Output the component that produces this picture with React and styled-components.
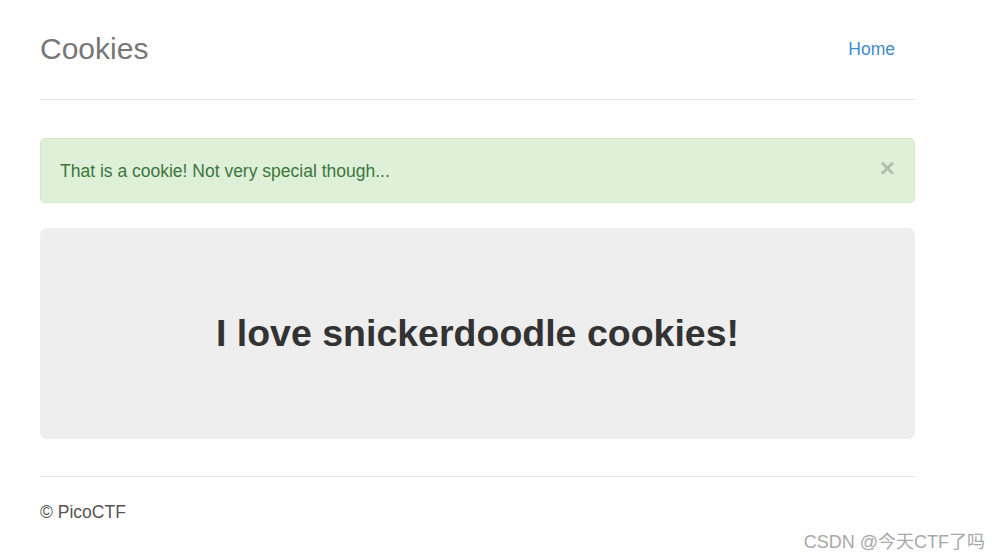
import React from "react";
import styled, { createGlobalStyle } from "styled-components";

const Global = createGlobalStyle`
  html, body { margin: 0; padding: 0; background: #fff; }
  body {
    font-family: "Liberation Sans", Arial, Helvetica, sans-serif;
    font-size: 17.5px;
    line-height: 1.42857;
    color: #333;
  }
  * { box-sizing: border-box; }
`;

const Page = styled.div`
  position: relative;
  width: 1001px;
  height: 560px;
  overflow: hidden;
`;

const Container = styled.div`
  width: 875px;
  margin-left: 40px;
`;

const Header = styled.header`
  display: flex;
  align-items: center;
  justify-content: space-between;
  padding-top: 24px;
  padding-bottom: 25px;
  border-bottom: 1px solid #e5e5e5;
  margin-bottom: 38px;
`;

const Brand = styled.h3`
  margin: 0;
  font-size: 30px;
  font-weight: 500;
  line-height: 50px;
  color: #777;
`;

const NavLink = styled.a`
  display: block;
  padding: 12px 20px 12px 19px;
  color: #428bca;
  text-decoration: none;
  font-size: 17.5px;
  line-height: 26px;
`;

const Alert = styled.div`
  display: flex;
  align-items: center;
  justify-content: space-between;
  height: 65px;
  padding: 0 19px;
  border: 1px solid #d6e9c6;
  border-radius: 5px;
  background: #dff0d8;
  color: #3c763d;
  margin-bottom: 25px;
  line-height: 24px;
`;

const Close = styled.button`
  border: 0;
  background: transparent;
  padding: 0;
  margin: -5px 0 0 0;
  font-family: "Liberation Sans", Arial, sans-serif;
  font-size: 26px;
  font-weight: bold;
  line-height: 1;
  color: #000;
  opacity: 0.2;
  text-shadow: 0 1px 0 #fff;
  cursor: pointer;
`;

const Jumbotron = styled.div`
  background: #eee;
  border-radius: 7px;
  padding: 84px 0 85px;
  text-align: center;
  margin-bottom: 37px;
`;

const Title = styled.h1`
  margin: 0;
  font-size: 37.5px;
  line-height: 42px;
  font-weight: bold;
  color: #333;
`;

const Footer = styled.footer`
  border-top: 1px solid #e5e5e5;
  padding-top: 23px;
  color: #555;
  line-height: 25px;
`;

const Watermark = styled.div`
  position: absolute;
  right: 16px;
  bottom: 6px;
  font-family: "Liberation Sans", "Noto Sans CJK SC", sans-serif;
  font-size: 18px;
  color: #a8a8a8;
  line-height: 24px;
  text-shadow: 0 0 1px #fff;
`;

export default function App() {
  return (
    <Page>
      <Global />
      <Container>
        <Header>
          <Brand>Cookies</Brand>
          <NavLink href="#">Home</NavLink>
        </Header>
        <Alert>
          <span>That is a cookie! Not very special though...</span>
          <Close aria-label="Close">×</Close>
        </Alert>
        <Jumbotron>
          <Title>I love snickerdoodle cookies!</Title>
        </Jumbotron>
        <Footer>© PicoCTF</Footer>
      </Container>
      <Watermark>CSDN @今天CTF了吗</Watermark>
    </Page>
  );
}
